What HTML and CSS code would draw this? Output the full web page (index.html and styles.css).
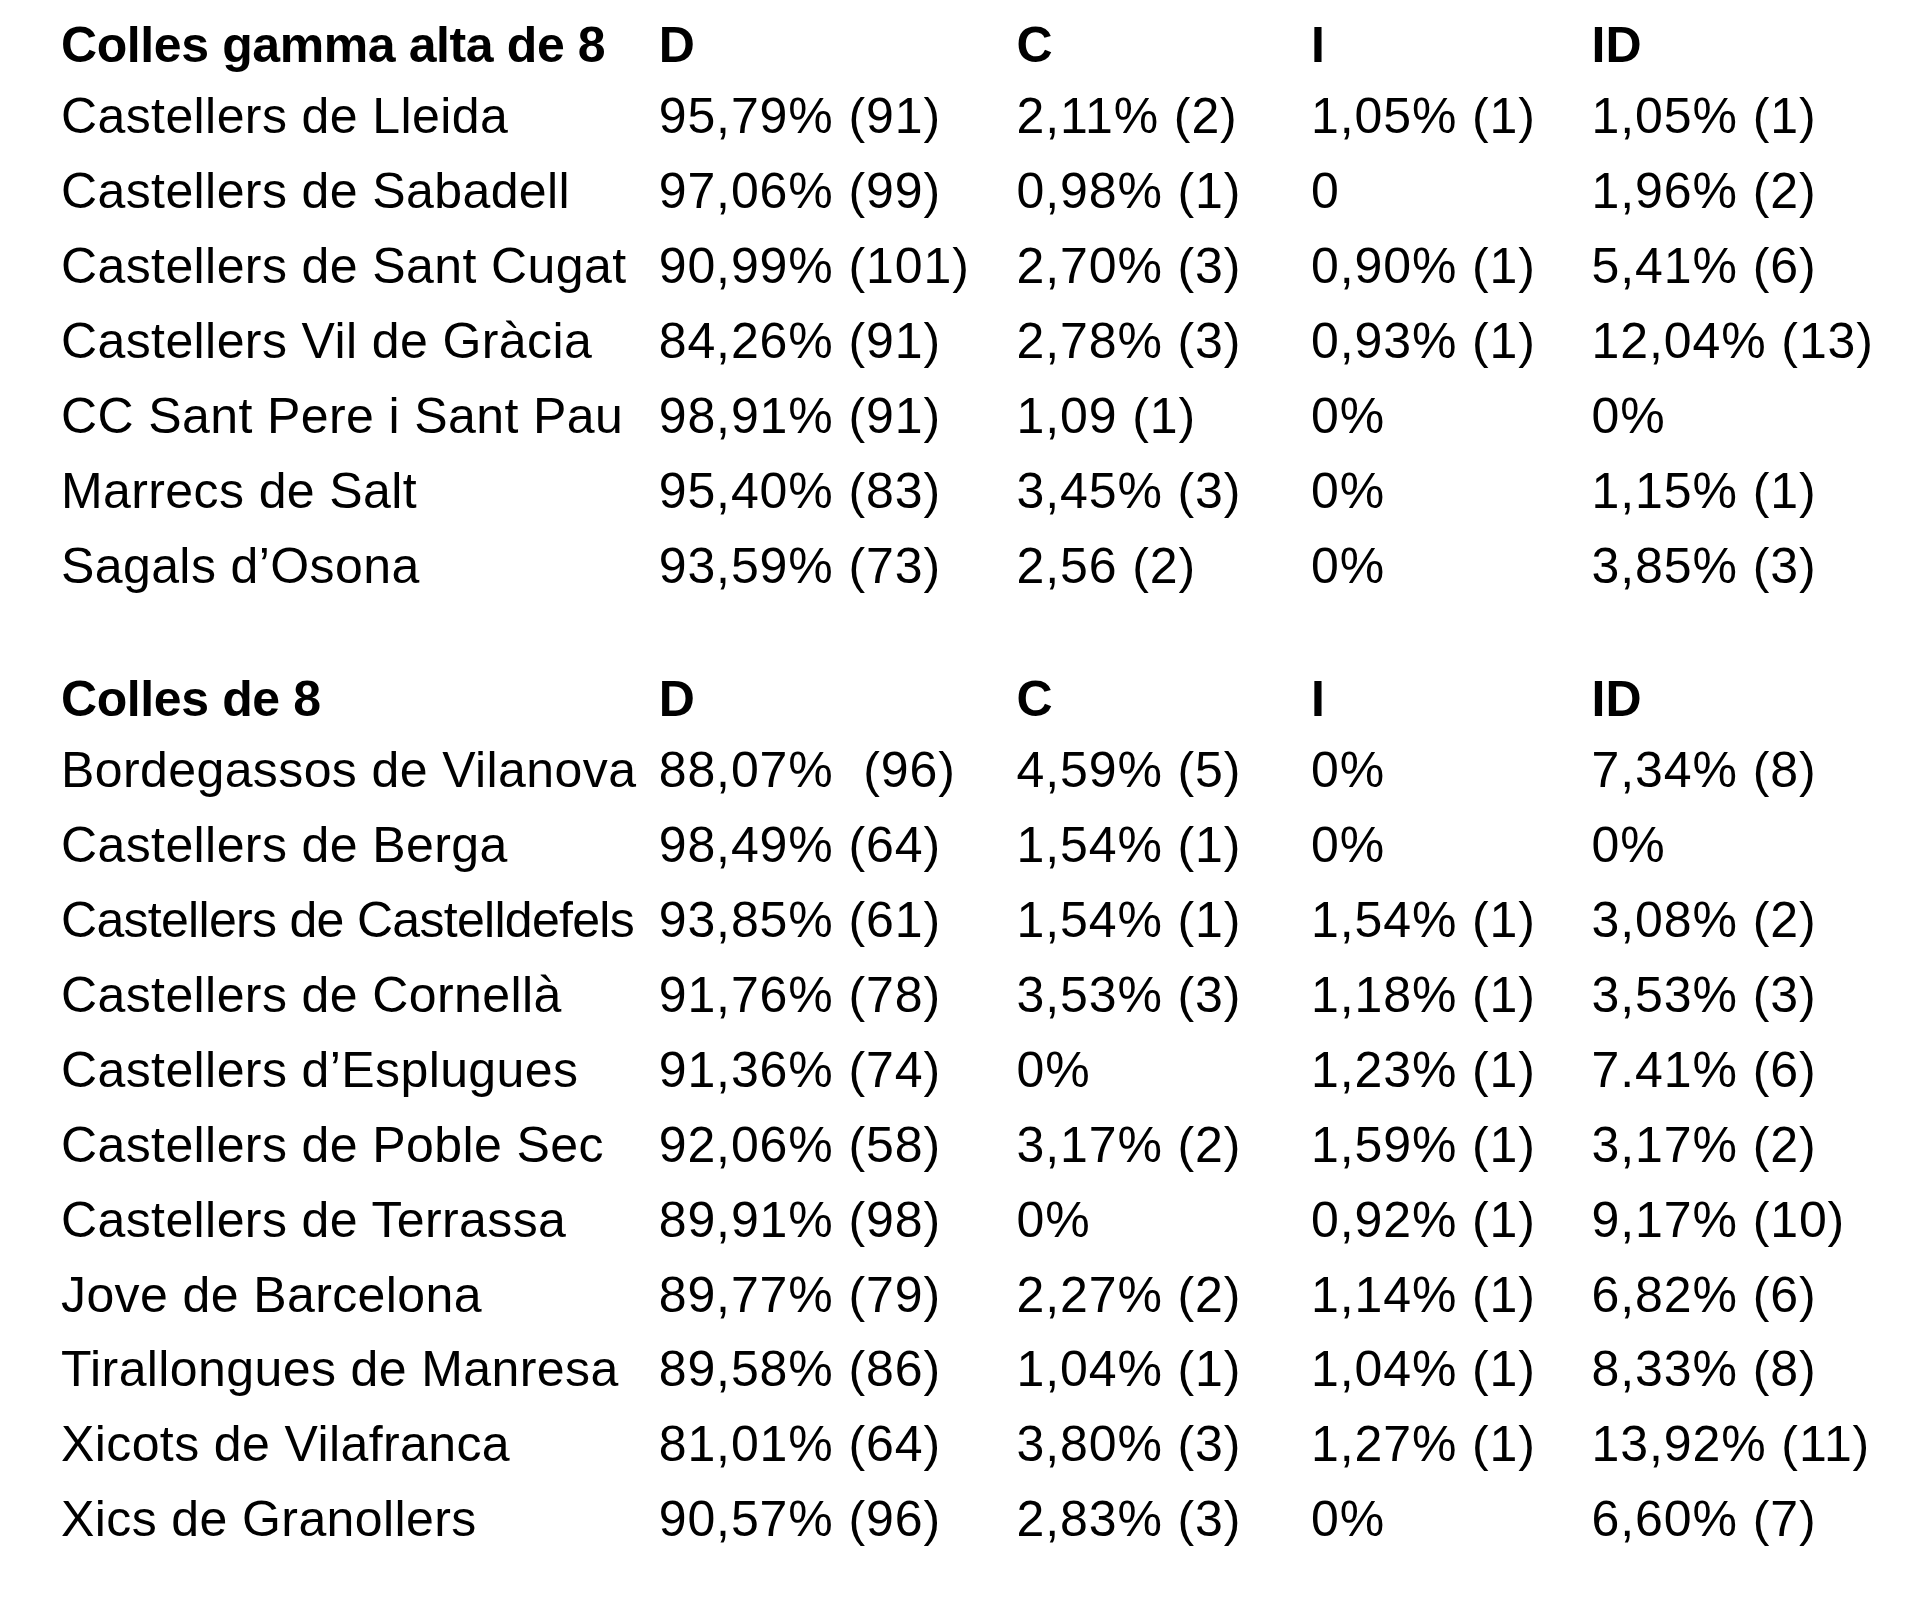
FILE: index.html
```html
<!DOCTYPE html>
<html lang="ca">
<head>
<meta charset="utf-8">
<title>Colles</title>
<link rel="stylesheet" href="styles.css">
</head>
<body>
<main class="page">
  <section class="table">
    <div class="row head"><span class="name">Colles gamma alta de 8</span><span>D</span><span>C</span><span>I</span><span>ID</span></div>
    <div class="row"><span class="name">Castellers de Lleida</span><span>95,79% (91)</span><span>2,11% (2)</span><span>1,05% (1)</span><span>1,05% (1)</span></div>
    <div class="row"><span class="name">Castellers de Sabadell</span><span>97,06% (99)</span><span>0,98% (1)</span><span>0</span><span>1,96% (2)</span></div>
    <div class="row"><span class="name">Castellers de Sant Cugat</span><span>90,99% (101)</span><span>2,70% (3)</span><span>0,90% (1)</span><span>5,41% (6)</span></div>
    <div class="row"><span class="name">Castellers Vil de Gràcia</span><span>84,26% (91)</span><span>2,78% (3)</span><span>0,93% (1)</span><span>12,04% (13)</span></div>
    <div class="row"><span class="name">CC Sant Pere i Sant Pau</span><span>98,91% (91)</span><span>1,09 (1)</span><span>0%</span><span>0%</span></div>
    <div class="row"><span class="name">Marrecs de Salt</span><span>95,40% (83)</span><span>3,45% (3)</span><span>0%</span><span>1,15% (1)</span></div>
    <div class="row"><span class="name">Sagals d’Osona</span><span>93,59% (73)</span><span>2,56 (2)</span><span>0%</span><span>3,85% (3)</span></div>
  </section>
  <section class="table second">
    <div class="row head"><span class="name">Colles de 8</span><span>D</span><span>C</span><span>I</span><span>ID</span></div>
    <div class="row"><span class="name">Bordegassos de Vilanova</span><span>88,07%&nbsp; (96)</span><span>4,59% (5)</span><span>0%</span><span>7,34% (8)</span></div>
    <div class="row"><span class="name">Castellers de Berga</span><span>98,49% (64)</span><span>1,54% (1)</span><span>0%</span><span>0%</span></div>
    <div class="row"><span class="name long">Castellers de Castelldefels</span><span>93,85% (61)</span><span>1,54% (1)</span><span>1,54% (1)</span><span>3,08% (2)</span></div>
    <div class="row"><span class="name">Castellers de Cornellà</span><span>91,76% (78)</span><span>3,53% (3)</span><span>1,18% (1)</span><span>3,53% (3)</span></div>
    <div class="row"><span class="name">Castellers d’Esplugues</span><span>91,36% (74)</span><span>0%</span><span>1,23% (1)</span><span>7.41% (6)</span></div>
    <div class="row"><span class="name">Castellers de Poble Sec</span><span>92,06% (58)</span><span>3,17% (2)</span><span>1,59% (1)</span><span>3,17% (2)</span></div>
    <div class="row"><span class="name">Castellers de Terrassa</span><span>89,91% (98)</span><span>0%</span><span>0,92% (1)</span><span>9,17% (10)</span></div>
    <div class="row"><span class="name">Jove de Barcelona</span><span>89,77% (79)</span><span>2,27% (2)</span><span>1,14% (1)</span><span>6,82% (6)</span></div>
    <div class="row"><span class="name">Tirallongues de Manresa</span><span>89,58% (86)</span><span>1,04% (1)</span><span>1,04% (1)</span><span>8,33% (8)</span></div>
    <div class="row"><span class="name">Xicots de Vilafranca</span><span>81,01% (64)</span><span>3,80% (3)</span><span>1,27% (1)</span><span>13,92% (11)</span></div>
    <div class="row"><span class="name">Xics de Granollers</span><span>90,57% (96)</span><span>2,83% (3)</span><span>0%</span><span>6,60% (7)</span></div>
  </section>
</main>
</body>
</html>
```
FILE: styles.css
```css
html, body {
  margin: 0;
  padding: 0;
  background: #ffffff;
}
body {
  font-family: "Liberation Sans", Arial, sans-serif;
  font-size: 50px;
  color: #000000;
}
.page {
  padding: 10.9px 0 0 61px;
}
.table {
  display: flex;
  flex-direction: column;
}
.table.second {
  margin-top: 61.7px;
}
.row {
  display: grid;
  grid-template-columns: 597.7px 357.8px 294.5px 280.6px auto;
  height: 74.95px;
  align-items: center;
  line-height: 1;
  letter-spacing: 0.9px;
  white-space: nowrap;
}
.row .name {
  letter-spacing: 0.4px;
}
.row .name.long {
  letter-spacing: -0.7px;
}
.row.head {
  height: 67.7px;
  font-weight: bold;
  letter-spacing: 0;
}
.row.head .name {
  letter-spacing: -0.4px;
}
```
